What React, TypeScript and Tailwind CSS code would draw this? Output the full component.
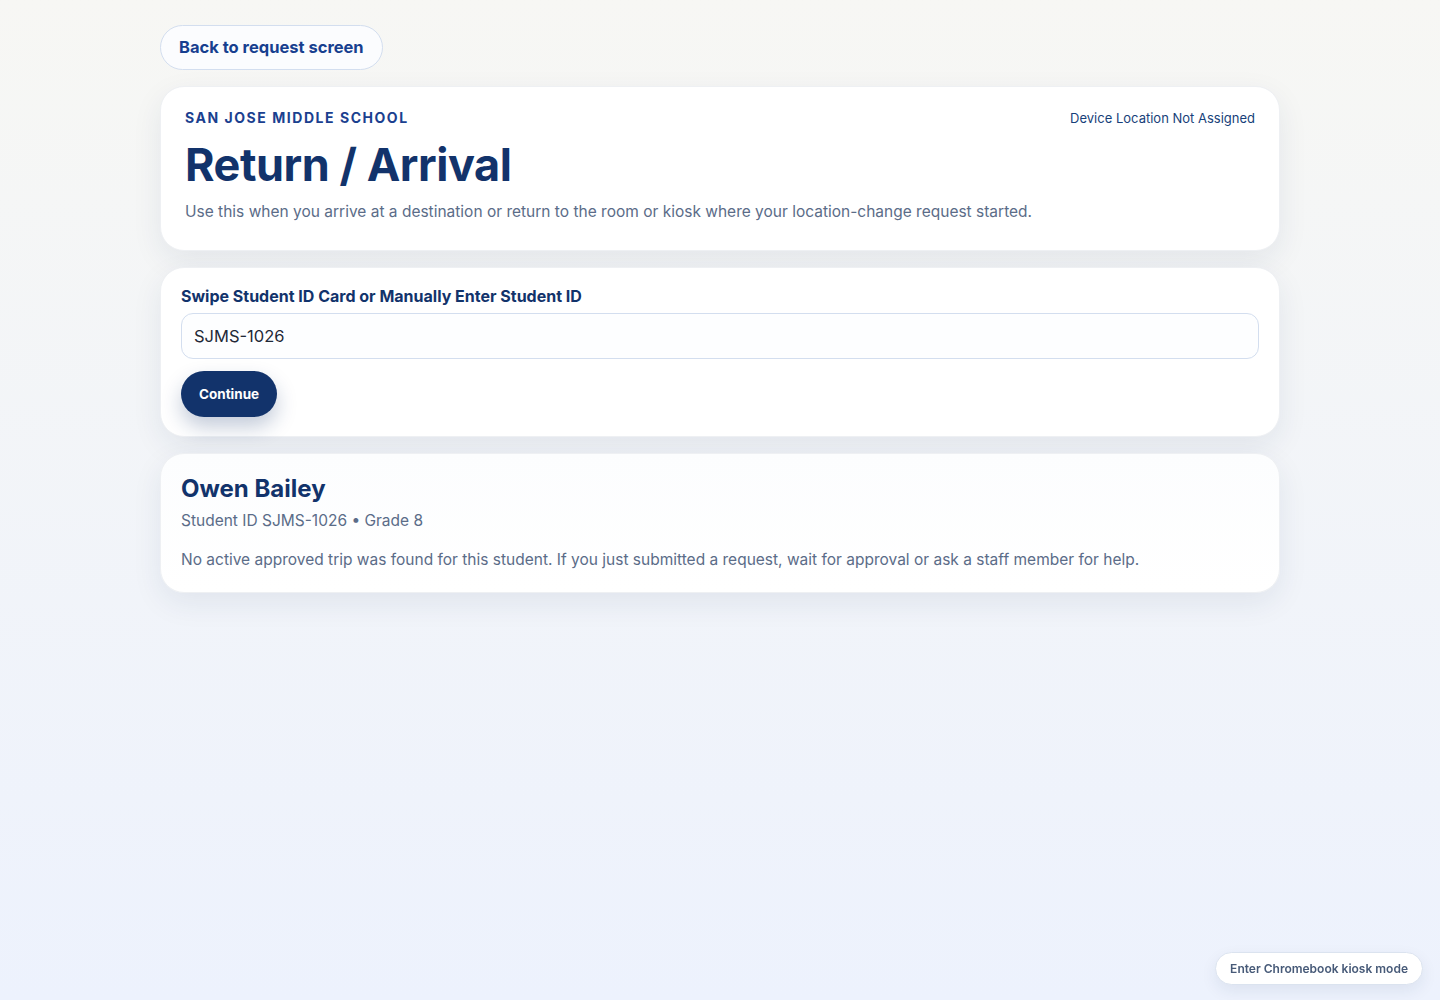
export default function App() {
  return (
    <div className="min-h-screen bg-gradient-to-b from-[#f7f7f4] to-[#edf2fd] font-['Inter','Liberation_Sans',sans-serif] text-[#12336b]">
      <div className="mx-auto w-[1120px] pt-[25px] pb-10 flex flex-col gap-4">
        <div className="flex">
          <button className="h-[45px] px-[18px] rounded-full border border-[#d3deef] bg-[#fbfcfe] text-[16.5px] font-bold text-[#173f8f]">
            Back to request screen
          </button>
        </div>

        {/* HEADER */}
        <div className="rounded-[24px] bg-white border border-[#eef0f3] shadow-[0_10px_30px_rgba(30,50,90,0.08)] px-6 pt-[21px] pb-[26px]">
          <div className="flex justify-between items-start h-5">
            <span className="text-[14px] leading-5 font-bold tracking-[0.11em] text-[#1a408f] uppercase">San Jose Middle School</span>
            <span className="text-[13px] leading-5 text-[#173f7a]">Device Location Not Assigned</span>
          </div>
          <h1 className="text-[45px] leading-[52px] font-bold mt-[11px] tracking-[-0.01em]">Return / Arrival</h1>
          <p className="text-[15.5px] leading-6 text-[#5b6c88] mt-[9px]">
            Use this when you arrive at a destination or return to the room or kiosk where your location-change request started.
          </p>
        </div>

        {/* LOOKUP */}
        <div className="rounded-[24px] bg-white border border-[#eef0f3] shadow-[0_10px_30px_rgba(30,50,90,0.08)] px-5 pt-[16px] pb-[19px]">
          <label className="block text-[16px] leading-6 font-bold text-[#12336b]">Swipe Student ID Card or Manually Enter Student ID</label>
          <div className="mt-[5px] h-[46px] rounded-[12px] border border-[#d3deef] bg-[#fdfeff] flex items-center px-3 text-[16.5px] text-[#1f2937]">
            SJMS-1026
          </div>
          <button className="mt-3 h-[46px] px-[18px] rounded-full bg-[#12336b] text-white text-[13.5px] font-bold shadow-[0_10px_20px_rgba(18,51,107,0.25)]">
            Continue
          </button>
        </div>

        {/* RESULT */}
        <div className="rounded-[24px] bg-gradient-to-b from-[#fcfdfe] to-white border border-[#eef0f3] shadow-[0_10px_30px_rgba(30,50,90,0.08)] px-5 pt-[19px] pb-[20px]">
          <h2 className="text-[24px] leading-[32px] font-bold">Owen Bailey</h2>
          <p className="text-[15.5px] leading-6 text-[#5b6c88] mt-[4px]">Student ID SJMS-1026 • Grade 8</p>
          <p className="text-[15.5px] leading-6 text-[#5b6c88] mt-[15px]">
            No active approved trip was found for this student. If you just submitted a request, wait for approval or ask a staff member for help.
          </p>
        </div>
      </div>

      <button className="fixed right-[17px] bottom-[15px] h-[33px] px-[14px] rounded-full border border-[#dbe3ef] bg-white text-[12px] font-semibold text-[#475a78] shadow-[0_6px_16px_rgba(30,50,90,0.08)]">
        Enter Chromebook kiosk mode
      </button>
    </div>
  )
}
